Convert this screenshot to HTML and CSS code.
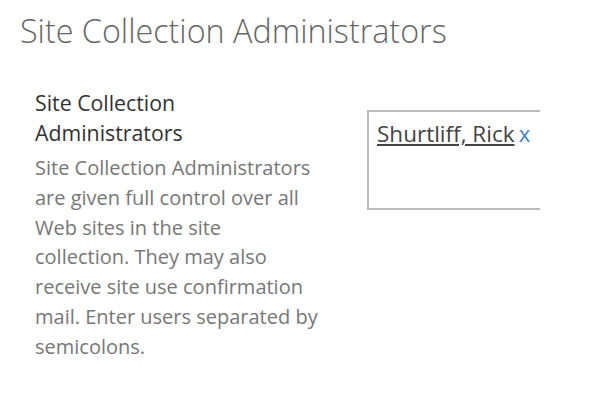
FILE: index.html
```html
<!DOCTYPE html>
<html>
	<head>
		<meta charset="UTF-8">
		<title>Site Collection Administrators</title>
		<link rel="stylesheet" href="styles.css">
	</head>
	<body>
		<h1 class="page-title">Site Collection Administrators</h1>
		<div class="section">
			<div class="section-info">
				<h3 class="section-label">Site Collection Administrators</h3>
				<p class="section-desc">Site Collection Administrators are given full control over all Web sites in the site<br>collection. They may also receive site use confirmation mail. Enter users separated by semicolons.</p>
			</div>
			<div class="section-field">
				<div class="people-picker">
					<a class="user" href="javascript:void(0);">Shurtliff, Rick</a>
					<a class="remove" href="javascript:void(0);">x</a>
				</div>
			</div>
		</div>
	</body>
</html>
```

FILE: styles.css
```css
*{
	margin: 0;
	padding: 0;
}
body{
	font-family: "Open Sans", "Liberation Sans", sans-serif;
	background-color: #fff;
	padding: 8px 0 0 20px;
}
.page-title{
	font-size: 32.3px;
	font-weight: 300;
	color: #666;
	line-height: 44px;
}
.section{
	display: flex;
	margin-top: 36px;
	padding-left: 15px;
}
.section-info{
	width: 288px;
}
.section-label{
	font-size: 21.3px;
	font-weight: normal;
	color: #333;
	line-height: 30px;
}
.section-desc{
	margin-top: 5px;
	font-size: 20px;
	color: #777;
	line-height: 29.8px;
}
.section-field{
	margin-left: 44px;
	padding-top: 22px;
}
.people-picker{
	box-sizing: border-box;
	width: 173px;
	height: 100px;
	padding: 6px 8px 4px;
	border: 2px solid #bbb;
	border-right: none;
	white-space: nowrap;
	overflow: hidden;
}
.user{
	font-size: 22.5px;
	color: #444;
	text-decoration: underline;
}
.remove{
	font-size: 22px;
	color: #3b85c6;
	text-decoration: none;
}
```
